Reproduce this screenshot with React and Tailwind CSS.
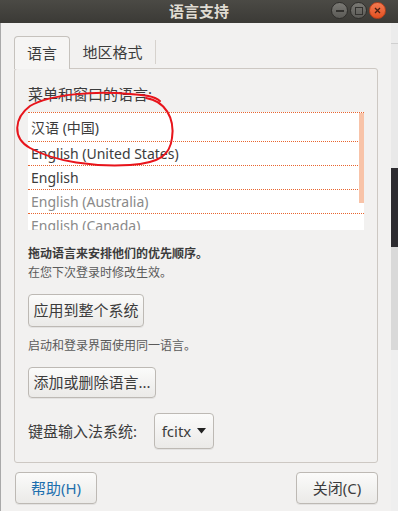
import React from "react";

const font = { fontFamily: '"Noto Sans", "Noto Sans CJK SC", sans-serif' };

const languages = [
  { name: "汉语 (中国)", muted: false, tall: true },
  { name: "English (United States)", muted: false },
  { name: "English", muted: false },
  { name: "English (Australia)", muted: true },
  { name: "English (Canada)", muted: true },
];

function GtkButton({ className = "", children }) {
  return (
    <button
      className={
        "flex items-center justify-center rounded-[4px] border border-[#bdb9b4] bg-gradient-to-b from-[#fbfbfa] to-[#ebeae8] shadow-[0_1px_0_rgba(0,0,0,0.06)] " +
        className
      }
    >
      {children}
    </button>
  );
}

function TitleButton({ kind }) {
  if (kind === "close") {
    return (
      <div className="flex h-[17px] w-[17px] items-center justify-center rounded-full border border-[#b8401c] bg-gradient-to-b from-[#f47a50] to-[#e2501f]">
        <svg width="7" height="7" viewBox="0 0 7 7">
          <path d="M1 1 L6 6 M6 1 L1 6" stroke="#4a2012" strokeWidth="1.3" />
        </svg>
      </div>
    );
  }
  return (
    <div className="flex h-[17px] w-[17px] items-center justify-center rounded-full border border-[#2f2e2b] bg-gradient-to-b from-[#7a7974] to-[#5b5a56]">
      {kind === "min" ? (
        <div className="h-[2px] w-[8px] bg-[#33322f]" />
      ) : (
        <div className="h-[8px] w-[8px] border-[1.5px] border-[#33322f]" />
      )}
    </div>
  );
}

export default function App() {
  return (
    <div className="relative h-[518px] w-[398px] overflow-hidden bg-white text-[#3c3c3c]" style={font}>
      {/* title bar */}
      <div className="relative flex h-[23px] items-center bg-gradient-to-b from-[#4b4a45] to-[#3b3a36]">
        <div className="flex-1 text-center text-[15px] font-bold leading-none text-[#dfdbd2]">语言支持</div>
        <div className="absolute right-[12px] top-[2px] flex gap-[2px]">
          <TitleButton kind="min" />
          <TitleButton kind="max" />
          <TitleButton kind="close" />
        </div>
      </div>

      <div className="flex">
        {/* window body */}
        <div className="flex h-[488px] w-[391px] flex-col bg-[#f2f1f0] px-[13px] pt-[13px] border-l border-[#a9a9a9]">
          {/* tabs */}
          <div className="relative z-10 flex h-[32px] items-stretch">
            <div className="-mb-px flex w-[56px] items-center justify-center rounded-t-[4px] border border-b-0 border-[#c6c2bd] bg-[#f6f5f4] text-[15px]">
              语言
            </div>
            <div className="my-[4px] flex w-[86px] items-center justify-center border-r border-[#d6d2cd] text-[15px]">
              地区格式
            </div>
          </div>

          {/* notebook frame */}
          <div className="flex h-[395px] flex-col rounded-[3px] border border-[#cdc8c3] px-[13px]">
            <div className="mt-[15px] h-[20px] text-[15px] leading-[20px]">菜单和窗口的语言:</div>

            <div className="relative mt-[8px] h-[118px] overflow-hidden bg-white">
              {languages.map((l) => (
                <div
                  key={l.name}
                  className={
                    "flex items-center border-t border-dotted border-[#e8652f] px-[3px] text-[14px] " +
                    (l.tall ? "h-[29px] " : "h-[24px] ") +
                    (l.muted ? "text-[#8a8a8a]" : "text-[#3c3c3c]")
                  }
                >
                  {l.name}
                </div>
              ))}
              <div className="absolute right-0 top-[1px] h-[90px] w-[5px] bg-[#f8c3a8]" />
            </div>

            <div className="mt-[15px] h-[18px] text-[12px] font-bold leading-[18px]">拖动语言来安排他们的优先顺序。</div>
            <div className="mt-[1px] h-[18px] text-[12px] leading-[18px] text-[#5a5a5a]">在您下次登录时修改生效。</div>

            <GtkButton className="mt-[12px] h-[33px] w-[116px] text-[15px]">应用到整个系统</GtkButton>

            <div className="mt-[10px] h-[18px] text-[12px] leading-[18px] text-[#5a5a5a]">启动和登录界面使用同一语言。</div>

            <GtkButton className="mt-[12px] h-[31px] w-[128px] text-[15px]">添加或删除语言...</GtkButton>

            <div className="mt-[15px] flex items-center">
              <span className="w-[126px] text-[15px]">键盘输入法系统:</span>
              <GtkButton className="h-[36px] w-[60px] gap-[6px] text-[15px]">
                <span>fcitx</span>
                <svg width="9" height="6" viewBox="0 0 9 6">
                  <path d="M0 0 H9 L4.5 5.5 Z" fill="#222" />
                </svg>
              </GtkButton>
            </div>
          </div>

          {/* dialog buttons */}
          <div className="mt-[9px] flex justify-between pl-[1px]">
            <GtkButton className="h-[32px] w-[82px] text-[15px] text-[#1d6fae]">帮助(H)</GtkButton>
            <GtkButton className="h-[32px] w-[82px] text-[15px]">关闭(C)</GtkButton>
          </div>
        </div>

        {/* background window strip */}
        <div className="flex w-[7px] flex-col">
          <div className="h-[20px] bg-[#ececec]" />
          <div className="h-[1px] bg-[#cfcfcf]" />
          <div className="h-[124px] bg-[#e9e9e9]" />
          <div className="h-[79px] bg-[#2c2b30]" />
          <div className="h-[103px] bg-[#d9d9d9]" />
          <div className="flex-1 bg-[#efefef]" />
        </div>
      </div>

      {/* hand-drawn red annotation */}
      <svg className="pointer-events-none absolute left-0 top-0" width="398" height="518">
        <path
          d="M146 98 C165 101 175 118 172 138 C170 155 160 163 130 165 C95 167 55 162 30 148 C12 138 14 118 30 106 C50 94 95 91 130 94 C145 95 154 96 160 101"
          fill="none"
          stroke="#e8141b"
          strokeWidth="2"
          strokeLinecap="round"
        />
      </svg>
    </div>
  );
}
